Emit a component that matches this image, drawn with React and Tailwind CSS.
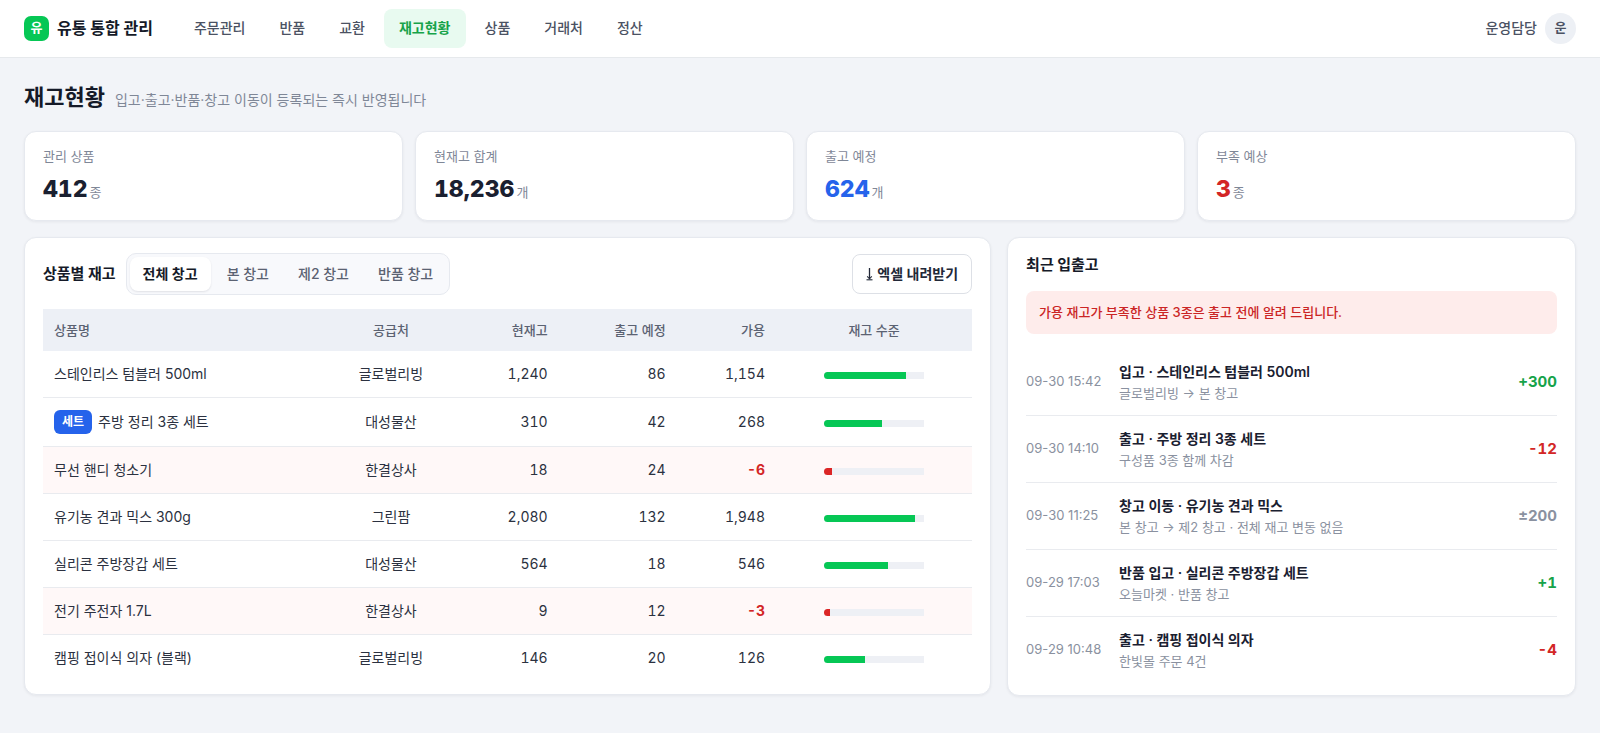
import { useState } from 'react';
import clsx from 'clsx';

const NAV = ['주문관리', '반품', '교환', '재고현황', '상품', '거래처', '정산'];

const STATS = [
  { label: '관리 상품', value: '412', unit: '종', tone: 'text-[#1a2030]' },
  { label: '현재고 합계', value: '18,236', unit: '개', tone: 'text-[#1a2030]' },
  { label: '출고 예정', value: '624', unit: '개', tone: 'text-[#2563eb]' },
  { label: '부족 예상', value: '3', unit: '종', tone: 'text-[#d32626]' },
];

const WAREHOUSES = ['전체 창고', '본 창고', '제2 창고', '반품 창고'];

const PRODUCTS = [
  { name: '스테인리스 텀블러 500ml', supplier: '글로벌리빙', stock: '1,240', outgoing: '86', available: '1,154', level: 82 },
  { name: '주방 정리 3종 세트', isSet: true, supplier: '대성물산', stock: '310', outgoing: '42', available: '268', level: 58 },
  { name: '무선 핸디 청소기', supplier: '한결상사', stock: '18', outgoing: '24', available: '-6', level: 8, short: true },
  { name: '유기농 견과 믹스 300g', supplier: '그린팜', stock: '2,080', outgoing: '132', available: '1,948', level: 91 },
  { name: '실리콘 주방장갑 세트', supplier: '대성물산', stock: '564', outgoing: '18', available: '546', level: 64 },
  { name: '전기 주전자 1.7L', supplier: '한결상사', stock: '9', outgoing: '12', available: '-3', level: 6, short: true },
  { name: '캠핑 접이식 의자 (블랙)', supplier: '글로벌리빙', stock: '146', outgoing: '20', available: '126', level: 41 },
];

const HISTORY = [
  { at: '09-30 15:42', title: '입고 · 스테인리스 텀블러 500ml', detail: '글로벌리빙 → 본 창고', qty: '+300', tone: 'text-[#16a34a]' },
  { at: '09-30 14:10', title: '출고 · 주방 정리 3종 세트', detail: '구성품 3종 함께 차감', qty: '-12', tone: 'text-[#d32626]' },
  { at: '09-30 11:25', title: '창고 이동 · 유기농 견과 믹스', detail: '본 창고 → 제2 창고 · 전체 재고 변동 없음', qty: '±200', tone: 'text-[#8a91a0]' },
  { at: '09-29 17:03', title: '반품 입고 · 실리콘 주방장갑 세트', detail: '오늘마켓 · 반품 창고', qty: '+1', tone: 'text-[#16a34a]' },
  { at: '09-29 10:48', title: '출고 · 캠핑 접이식 의자', detail: '한빛몰 주문 4건', qty: '-4', tone: 'text-[#d32626]' },
];

function Card({ className, children }) {
  return (
    <section className={clsx('rounded-xl border border-[#e6e9ef] bg-white shadow-[0_1px_3px_rgba(16,24,40,0.06)]', className)}>
      {children}
    </section>
  );
}

function Header() {
  return (
    <header className="flex h-[58px] items-center border-b border-[#e6e9ec] bg-white px-6 pb-px">
      <div className="flex items-center gap-2">
        <span className="flex size-[25px] items-center justify-center rounded-[7px] bg-[#06c755] text-[13px] font-bold text-white">
          유
        </span>
        <span className="text-base font-bold text-[#151a28]">유통 통합 관리</span>
      </div>
      <nav className="ml-[26px] flex gap-1">
        {NAV.map((item) => (
          <a
            key={item}
            href="#"
            className={clsx(
              'rounded-lg px-[15px] pt-[7px] pb-[9px] text-sm leading-[23px]',
              item === '재고현황' ? 'bg-[#e8faf0] font-bold text-[#16a34a]' : 'font-medium text-[#4b5263]'
            )}
          >
            {item}
          </a>
        ))}
      </nav>
      <div className="ml-auto flex items-center gap-2">
        <span className="text-sm font-medium text-[#4b5263]">운영담당</span>
        <span className="flex size-[31px] items-center justify-center rounded-full bg-[#edf0f5] text-[13px] font-bold text-[#4b5263]">
          운
        </span>
      </div>
    </header>
  );
}

function StatCard({ label, value, unit, tone }) {
  return (
    <Card className="px-[18px] pt-3.5 pb-[13px]">
      <p className="text-[13px] leading-5 text-[#7f8797]">{label}</p>
      <p className="mt-1.5 flex items-baseline gap-0.5">
        <span className={clsx("text-[23px] leading-[35px] font-extrabold tabular-nums [font-variation-settings:'opsz'_14]", tone)}>
          {value}
        </span>
        <span className="text-[13px] leading-5 text-[#7f8797]">{unit}</span>
      </p>
    </Card>
  );
}

function DownloadIcon() {
  return (
    <svg className="h-3.5 w-[7px]" viewBox="0 0 7 14" fill="none" stroke="currentColor" aria-hidden="true">
      <path d="M3.5 1v10.5" strokeWidth="1.3" />
      <path d="M1.2 9.3l2.3 2.5 2.3-2.5" strokeWidth="1.1" />
      <path d="M0.5 12.8h6" strokeWidth="1.1" />
    </svg>
  );
}

function LevelBar({ level, short }) {
  return (
    <div className="mx-auto h-[7px] w-[100px] overflow-hidden rounded-l-full bg-[#eef0f5]">
      <div className={clsx('h-full', short ? 'bg-[#dc2626]' : 'bg-[#06c755]')} style={{ width: `${level}%` }} />
    </div>
  );
}

function ProductTable() {
  return (
    <table className="mt-3.5 w-full table-fixed text-sm leading-[22px] text-[#2b3140]">
      <colgroup>
        <col className="w-[29.4%]" />
        <col className="w-[16.1%]" />
        <col className="w-[10%]" />
        <col className="w-[12.7%]" />
        <col className="w-[10.7%]" />
        <col />
      </colgroup>
      <thead>
        <tr className="bg-[#edf0f6] text-[13px] text-[#5b6272]">
          <th className="px-[11px] py-2.5 text-left font-medium">상품명</th>
          <th className="px-3 py-2.5 text-center font-medium">공급처</th>
          <th className="px-[11px] py-2.5 text-right font-medium">현재고</th>
          <th className="px-[11px] py-2.5 text-right font-medium">출고 예정</th>
          <th className="px-[11px] py-2.5 text-right font-medium">가용</th>
          <th className="px-3 py-2.5 text-center font-medium">재고 수준</th>
        </tr>
      </thead>
      <tbody>
        {PRODUCTS.map((p) => (
          <tr key={p.name} className={clsx('border-b border-[#e9ebef] last:border-b-0', p.short && 'bg-[#fff8f8]')}>
            <td className="px-[11px] py-3">
              {p.isSet ? (
                <div className="flex items-center gap-1.5">
                  <span className="rounded-md bg-[#2563eb] px-2 text-xs leading-6 font-bold text-white">세트</span>
                  {p.name}
                </div>
              ) : (
                p.name
              )}
            </td>
            <td className="px-3 py-3 text-center">{p.supplier}</td>
            <td className="px-[11px] py-3 text-right tabular-nums">{p.stock}</td>
            <td className="px-[11px] py-3 text-right tabular-nums">{p.outgoing}</td>
            <td className={clsx('px-[11px] py-3 text-right tabular-nums', p.short && 'font-bold text-[#d32626]')}>
              {p.available}
            </td>
            <td className="px-3 pt-3.5 pb-3">
              <LevelBar level={p.level} short={p.short} />
            </td>
          </tr>
        ))}
      </tbody>
    </table>
  );
}

function ProductPanel() {
  const [warehouse, setWarehouse] = useState(WAREHOUSES[0]);

  return (
    <Card className="px-[18px] pt-[15px] pb-[13px]">
      <div className="flex items-center gap-2.5">
        <h2 className="text-[15px] font-bold text-[#151a28]">상품별 재고</h2>
        <div className="flex gap-[3px] rounded-[10px] border border-[#e6e9ef] bg-[#f8f9fc] p-[3px]">
          {WAREHOUSES.map((w) => (
            <button
              key={w}
              type="button"
              onClick={() => setWarehouse(w)}
              className={clsx(
                'rounded-lg px-[13px] py-1.5 text-sm leading-[22px]',
                w === warehouse
                  ? 'bg-white font-semibold text-[#151a28] shadow-[0_1px_2px_rgba(16,24,40,0.1)]'
                  : 'font-medium text-[#5b6272]'
              )}
            >
              {w}
            </button>
          ))}
        </div>
        <button
          type="button"
          className="ml-auto flex items-center gap-1 rounded-lg border border-[#dde0e6] bg-white px-[13px] py-2 text-sm leading-[22px] font-semibold text-[#222838]"
        >
          <DownloadIcon />
          엑셀 내려받기
        </button>
      </div>
      <ProductTable />
    </Card>
  );
}

function HistoryPanel() {
  return (
    <Card className="px-[18px] pt-[15px] pb-3">
      <h2 className="text-[15px] leading-6 font-bold text-[#151a28]">최근 입출고</h2>
      <p className="mt-3.5 rounded-lg bg-[#feeceb] px-[13px] py-2.5 text-[13px] leading-[23px] font-medium text-[#cb2525]">
        가용 재고가 부족한 상품 3종은 출고 전에 알려 드립니다.
      </p>
      <ul className="mt-[15px]">
        {HISTORY.map((h) => (
          <li key={h.at} className="flex items-center border-b border-[#e9ebef] py-3 last:border-b-0">
            <time className="w-[93px] shrink-0 text-[13px] text-[#8a91a0]">{h.at}</time>
            <div className="min-w-0 flex-1">
              <p className="text-sm leading-[22px] font-semibold text-[#1a2030]">{h.title}</p>
              <p className="text-[13px] leading-5 text-[#8a91a0]">{h.detail}</p>
            </div>
            <span className={clsx('text-[15px] font-bold tabular-nums', h.tone)}>{h.qty}</span>
          </li>
        ))}
      </ul>
    </Card>
  );
}

export default function App() {
  return (
    <div className="min-h-screen bg-[#f2f4f8] font-['Inter','Noto_Sans_CJK_KR',sans-serif]">
      <Header />
      <main className="px-6 pt-[23px] pb-9">
        <div className="flex items-baseline gap-2.5">
          <h1 className="text-[22px] leading-8 font-bold text-[#151a28]">재고현황</h1>
          <p className="text-sm text-[#7f8797]">입고·출고·반품·창고 이동이 등록되는 즉시 반영됩니다</p>
        </div>
        <div className="mt-[18px] grid grid-cols-4 gap-3">
          {STATS.map((s) => (
            <StatCard key={s.label} {...s} />
          ))}
        </div>
        <div className="mt-4 grid grid-cols-[1.7fr_1fr] items-start gap-4">
          <ProductPanel />
          <HistoryPanel />
        </div>
      </main>
    </div>
  );
}
